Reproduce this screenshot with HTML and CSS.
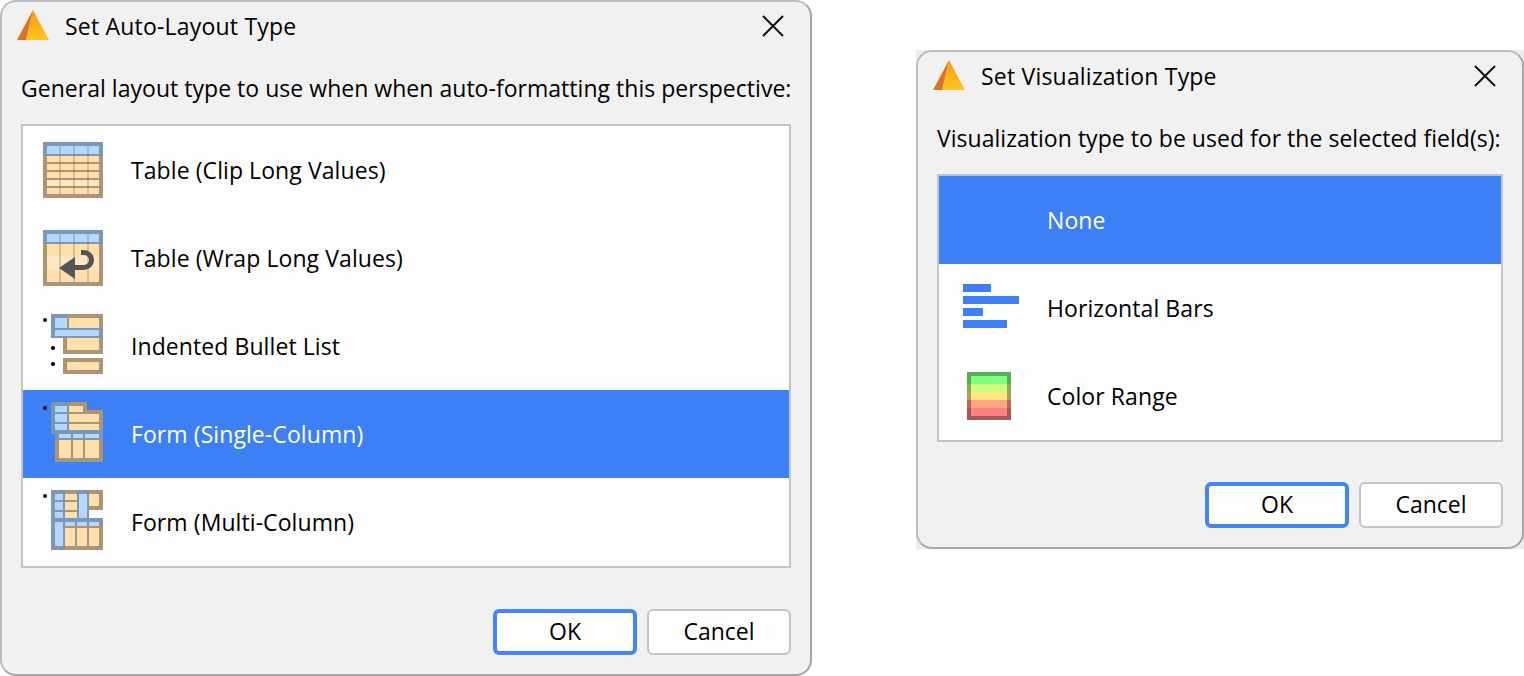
FILE: index.html
```html
<!DOCTYPE html>
<html lang="en">
<head>
    <meta charset="UTF-8">
    <title>Set Auto-Layout Type</title>
    <link rel="stylesheet" href="styles.css">
</head>
<body>
    <svg class="defs" width="0" height="0" aria-hidden="true">
        <defs>
            <linearGradient id="cone-light" x1="0" y1="0" x2="0" y2="1">
                <stop offset="0" stop-color="#f79a1e"/>
                <stop offset="1" stop-color="#ffc61c"/>
            </linearGradient>
            <symbol id="cone" viewBox="0 0 32 30">
                <polygon points="16,0 32,30 9,30" fill="url(#cone-light)"/>
                <polygon points="16,0 9,30 0,30" fill="#d8752a"/>
            </symbol>
            <symbol id="close" viewBox="0 0 22 22">
                <path d="M1 1 L21 21 M21 1 L1 21" fill="none" stroke="#111" stroke-width="2"/>
            </symbol>
        </defs>
    </svg>

    <section class="window window-layout">
        <header class="titlebar">
            <svg class="app-icon"><use href="#cone"/></svg>
            <span class="title">Set Auto-Layout Type</span>
            <svg class="close-icon"><use href="#close"/></svg>
        </header>
        <p class="prompt">General layout type to use when when auto-formatting this perspective:</p>
        <div class="list">
            <div class="item">
                <svg class="item-icon" viewBox="0 0 64 64" shape-rendering="crispEdges">
                    <rect class="tan" x="2" y="4" width="60" height="56"/>
                    <rect class="steel" x="2" y="4" width="60" height="14"/>
                    <rect class="sky" x="6" y="8" width="52" height="8"/>
                    <rect class="peach" x="6" y="18" width="52" height="6"/>
                    <rect class="peach" x="6" y="26" width="52" height="6"/>
                    <rect class="peach" x="6" y="34" width="52" height="6"/>
                    <rect class="cream" x="6" y="42" width="52" height="6"/>
                    <rect class="peach" x="6" y="50" width="52" height="6"/>
                    <rect class="rule" x="18" y="8" width="2" height="48"/>
                    <rect class="rule" x="32" y="8" width="2" height="48"/>
                    <rect class="rule" x="46" y="8" width="2" height="48"/>
                </svg>
                <span>Table (Clip Long Values)</span>
            </div>
            <div class="item">
                <svg class="item-icon" viewBox="0 0 64 64">
                    <g shape-rendering="crispEdges">
                        <rect class="tan" x="2" y="4" width="60" height="56"/>
                        <rect class="steel" x="2" y="4" width="60" height="14"/>
                        <rect class="sky" x="6" y="8" width="52" height="8"/>
                        <rect class="peach" x="6" y="18" width="52" height="38"/>
                        <rect class="cream" x="6" y="30" width="52" height="14"/>
                        <rect class="rule" x="18" y="8" width="2" height="48"/>
                        <rect class="rule" x="32" y="8" width="2" height="48"/>
                        <rect class="rule" x="46" y="8" width="2" height="48"/>
                    </g>
                    <polygon class="arrow-head" points="18,42 34,31 34,53"/>
                    <path class="arrow-tail" d="M32 41.5 H43 A7.5 7.5 0 0 0 43 26.5 H40"/>
                </svg>
                <span>Table (Wrap Long Values)</span>
            </div>
            <div class="item">
                <svg class="item-icon" viewBox="0 0 64 64" shape-rendering="crispEdges">
                    <circle class="dot" cx="4" cy="6" r="2" shape-rendering="auto"/>
                    <circle class="dot" cx="12" cy="34" r="2" shape-rendering="auto"/>
                    <circle class="dot" cx="12" cy="50" r="2" shape-rendering="auto"/>
                    <rect class="tan" x="26" y="0" width="36" height="14"/>
                    <rect class="steel" x="10" y="0" width="16" height="14"/>
                    <rect class="steel" x="10" y="14" width="52" height="10"/>
                    <rect class="sky" x="14" y="4" width="12" height="10"/>
                    <rect class="peach" x="28" y="4" width="30" height="10"/>
                    <rect class="sky" x="14" y="16" width="44" height="6"/>
                    <rect class="tan" x="22" y="24" width="40" height="16"/>
                    <rect class="peach" x="26" y="24" width="32" height="12"/>
                    <rect class="tan" x="22" y="44" width="40" height="16"/>
                    <rect class="peach" x="26" y="48" width="32" height="8"/>
                </svg>
                <span>Indented Bullet List</span>
            </div>
            <div class="item is-selected">
                <svg class="item-icon" viewBox="0 0 64 64" shape-rendering="crispEdges">
                    <circle class="dot" cx="4" cy="6" r="2" shape-rendering="auto"/>
                    <rect class="tan" x="28" y="0" width="18" height="8"/>
                    <rect class="tan" x="28" y="8" width="34" height="20"/>
                    <rect class="steel" x="10" y="0" width="18" height="32"/>
                    <rect class="sky" x="14" y="4" width="12" height="6"/>
                    <rect class="sky" x="14" y="12" width="12" height="8"/>
                    <rect class="sky" x="14" y="22" width="12" height="6"/>
                    <rect class="peach" x="28" y="4" width="14" height="6"/>
                    <rect class="peach" x="28" y="12" width="30" height="8"/>
                    <rect class="peach" x="28" y="22" width="30" height="6"/>
                    <rect class="tan" x="14" y="38" width="48" height="22"/>
                    <rect class="steel" x="14" y="28" width="48" height="10"/>
                    <rect class="sky" x="18" y="32" width="12" height="4"/>
                    <rect class="sky" x="32" y="32" width="10" height="4"/>
                    <rect class="sky" x="44" y="32" width="14" height="4"/>
                    <rect class="peach" x="18" y="38" width="12" height="18"/>
                    <rect class="peach" x="32" y="38" width="10" height="18"/>
                    <rect class="peach" x="44" y="38" width="14" height="18"/>
                </svg>
                <span>Form (Single-Column)</span>
            </div>
            <div class="item">
                <svg class="item-icon" viewBox="0 0 64 64" shape-rendering="crispEdges">
                    <circle class="dot" cx="4" cy="6" r="2" shape-rendering="auto"/>
                    <rect class="tan" x="24" y="0" width="12" height="28"/>
                    <rect class="tan" x="48" y="0" width="14" height="20"/>
                    <rect class="steel" x="10" y="0" width="14" height="60"/>
                    <rect class="steel" x="36" y="0" width="12" height="28"/>
                    <rect class="sky" x="14" y="4" width="8" height="6"/>
                    <rect class="sky" x="14" y="12" width="8" height="8"/>
                    <rect class="sky" x="14" y="22" width="8" height="6"/>
                    <rect class="peach" x="24" y="4" width="12" height="6"/>
                    <rect class="peach" x="24" y="12" width="12" height="8"/>
                    <rect class="peach" x="24" y="22" width="12" height="6"/>
                    <rect class="sky" x="38" y="4" width="8" height="24"/>
                    <rect class="peach" x="48" y="4" width="10" height="12"/>
                    <rect class="sky" x="14" y="32" width="8" height="24"/>
                    <rect class="tan" x="24" y="36" width="38" height="24"/>
                    <rect class="steel" x="24" y="28" width="38" height="8"/>
                    <rect class="sky" x="24" y="32" width="10" height="4"/>
                    <rect class="sky" x="36" y="32" width="10" height="4"/>
                    <rect class="sky" x="48" y="32" width="10" height="4"/>
                    <rect class="peach" x="24" y="38" width="10" height="18"/>
                    <rect class="peach" x="36" y="38" width="10" height="18"/>
                    <rect class="peach" x="48" y="38" width="10" height="18"/>
                </svg>
                <span>Form (Multi-Column)</span>
            </div>
        </div>
        <footer class="actions">
            <button class="btn btn-default">OK</button>
            <button class="btn">Cancel</button>
        </footer>
    </section>

    <div class="backing">
        <section class="window window-vis">
            <header class="titlebar">
                <svg class="app-icon"><use href="#cone"/></svg>
                <span class="title">Set Visualization Type</span>
                <svg class="close-icon"><use href="#close"/></svg>
            </header>
            <p class="prompt">Visualization type to be used for the selected field(s):</p>
            <div class="list">
                <div class="item is-selected">
                    <svg class="item-icon" viewBox="0 0 64 64"></svg>
                    <span>None</span>
                </div>
                <div class="item">
                    <svg class="item-icon" viewBox="0 0 64 64" shape-rendering="crispEdges">
                        <rect class="bar" x="6" y="8" width="28" height="8"/>
                        <rect class="bar" x="6" y="20" width="56" height="8"/>
                        <rect class="bar" x="6" y="32" width="20" height="8"/>
                        <rect class="bar" x="6" y="44" width="44" height="8"/>
                    </svg>
                    <span>Horizontal Bars</span>
                </div>
                <div class="item">
                    <svg class="item-icon" viewBox="0 0 64 64" shape-rendering="crispEdges">
                        <rect fill="#59aa59" x="10" y="8" width="44" height="12"/>
                        <rect fill="#8fa859" x="10" y="20" width="44" height="8"/>
                        <rect fill="#aaa059" x="10" y="28" width="44" height="8"/>
                        <rect fill="#aa6f59" x="10" y="36" width="44" height="8"/>
                        <rect fill="#aa5555" x="10" y="44" width="44" height="12"/>
                        <rect fill="#80ff80" x="14" y="12" width="36" height="8"/>
                        <rect fill="#ccff80" x="14" y="20" width="36" height="8"/>
                        <rect fill="#ffe680" x="14" y="28" width="36" height="8"/>
                        <rect fill="#ffa680" x="14" y="36" width="36" height="8"/>
                        <rect fill="#ff8080" x="14" y="44" width="36" height="8"/>
                    </svg>
                    <span>Color Range</span>
                </div>
            </div>
            <footer class="actions">
                <button class="btn btn-default">OK</button>
                <button class="btn">Cancel</button>
            </footer>
        </section>
    </div>
</body>
</html>
```

FILE: styles.css
```css
html, body {
    margin: 0;
    height: 100%;
    background: #fff;
    overflow: hidden;
}

body {
    position: relative;
    font-family: "Open Sans", "Noto Sans", sans-serif;
    font-size: 23px;
    color: #000;
}

.defs {
    position: absolute;
}

.window {
    box-sizing: border-box;
    display: flex;
    flex-direction: column;
    padding: 0 19px 19px;
    border: 2px solid #bdbdbd;
    border-right-color: #a6a6a6;
    border-bottom-color: #a6a6a6;
    border-radius: 16px;
    background: #f1f1f1;
}

.window-layout {
    position: absolute;
    left: 0;
    top: 0;
    width: 812px;
    height: 676px;
}

/* the second capture keeps the grey behind its rounded corners */
.backing {
    position: absolute;
    left: 916px;
    top: 50px;
    width: 608px;
    height: 499px;
    background: #ececec;
}

.window-vis {
    height: 100%;
}

.titlebar {
    display: flex;
    align-items: center;
    height: 50px;
    margin: 0 -2px 0 -4px;
}

.app-icon {
    width: 32px;
    height: 30px;
    margin: 0 16px 4px 0;
    flex: none;
}

.title {
    flex: 1;
    position: relative;
    top: -1px;
    letter-spacing: 0.2px;
}

.close-icon {
    width: 22px;
    height: 22px;
    margin: 0 9px 2px 0;
    flex: none;
}

.prompt {
    margin: 0;
    height: 72px;
    line-height: 73px;
    white-space: nowrap;
    letter-spacing: 0.03px;
}

.list {
    border: 2px solid #c4c4c4;
    background: #fdfdfd;
}

.item {
    display: flex;
    align-items: center;
    gap: 26px;
    height: 88px;
    padding-left: 18px;
    letter-spacing: 0.08px;
}

.item-icon {
    width: 64px;
    height: 64px;
    flex: none;
}

.is-selected {
    background: #3d80f5;
    color: #fff;
}

.actions {
    display: flex;
    justify-content: flex-end;
    gap: 10px;
    margin-top: auto;
}

.btn {
    box-sizing: border-box;
    width: 144px;
    height: 46px;
    padding: 0 0 2px;
    border: 2px solid #c4c4c4;
    border-radius: 6px;
    background: #fdfdfd;
    font: inherit;
    color: #000;
}

.btn-default {
    border: 4px solid #4285f4;
}

.tan { fill: #ab9574; }
.steel { fill: #7b97b4; }
.sky { fill: #b3d7ff; }
.peach { fill: #ffdfac; }
.cream { fill: #ffe6c2; }
.rule { fill: rgba(130, 110, 90, 0.3); }
.dot { fill: #000; }
.bar { fill: #3d80f5; }
.arrow-head { fill: #555; }
.arrow-tail { fill: none; stroke: #555; stroke-width: 5; }
```
